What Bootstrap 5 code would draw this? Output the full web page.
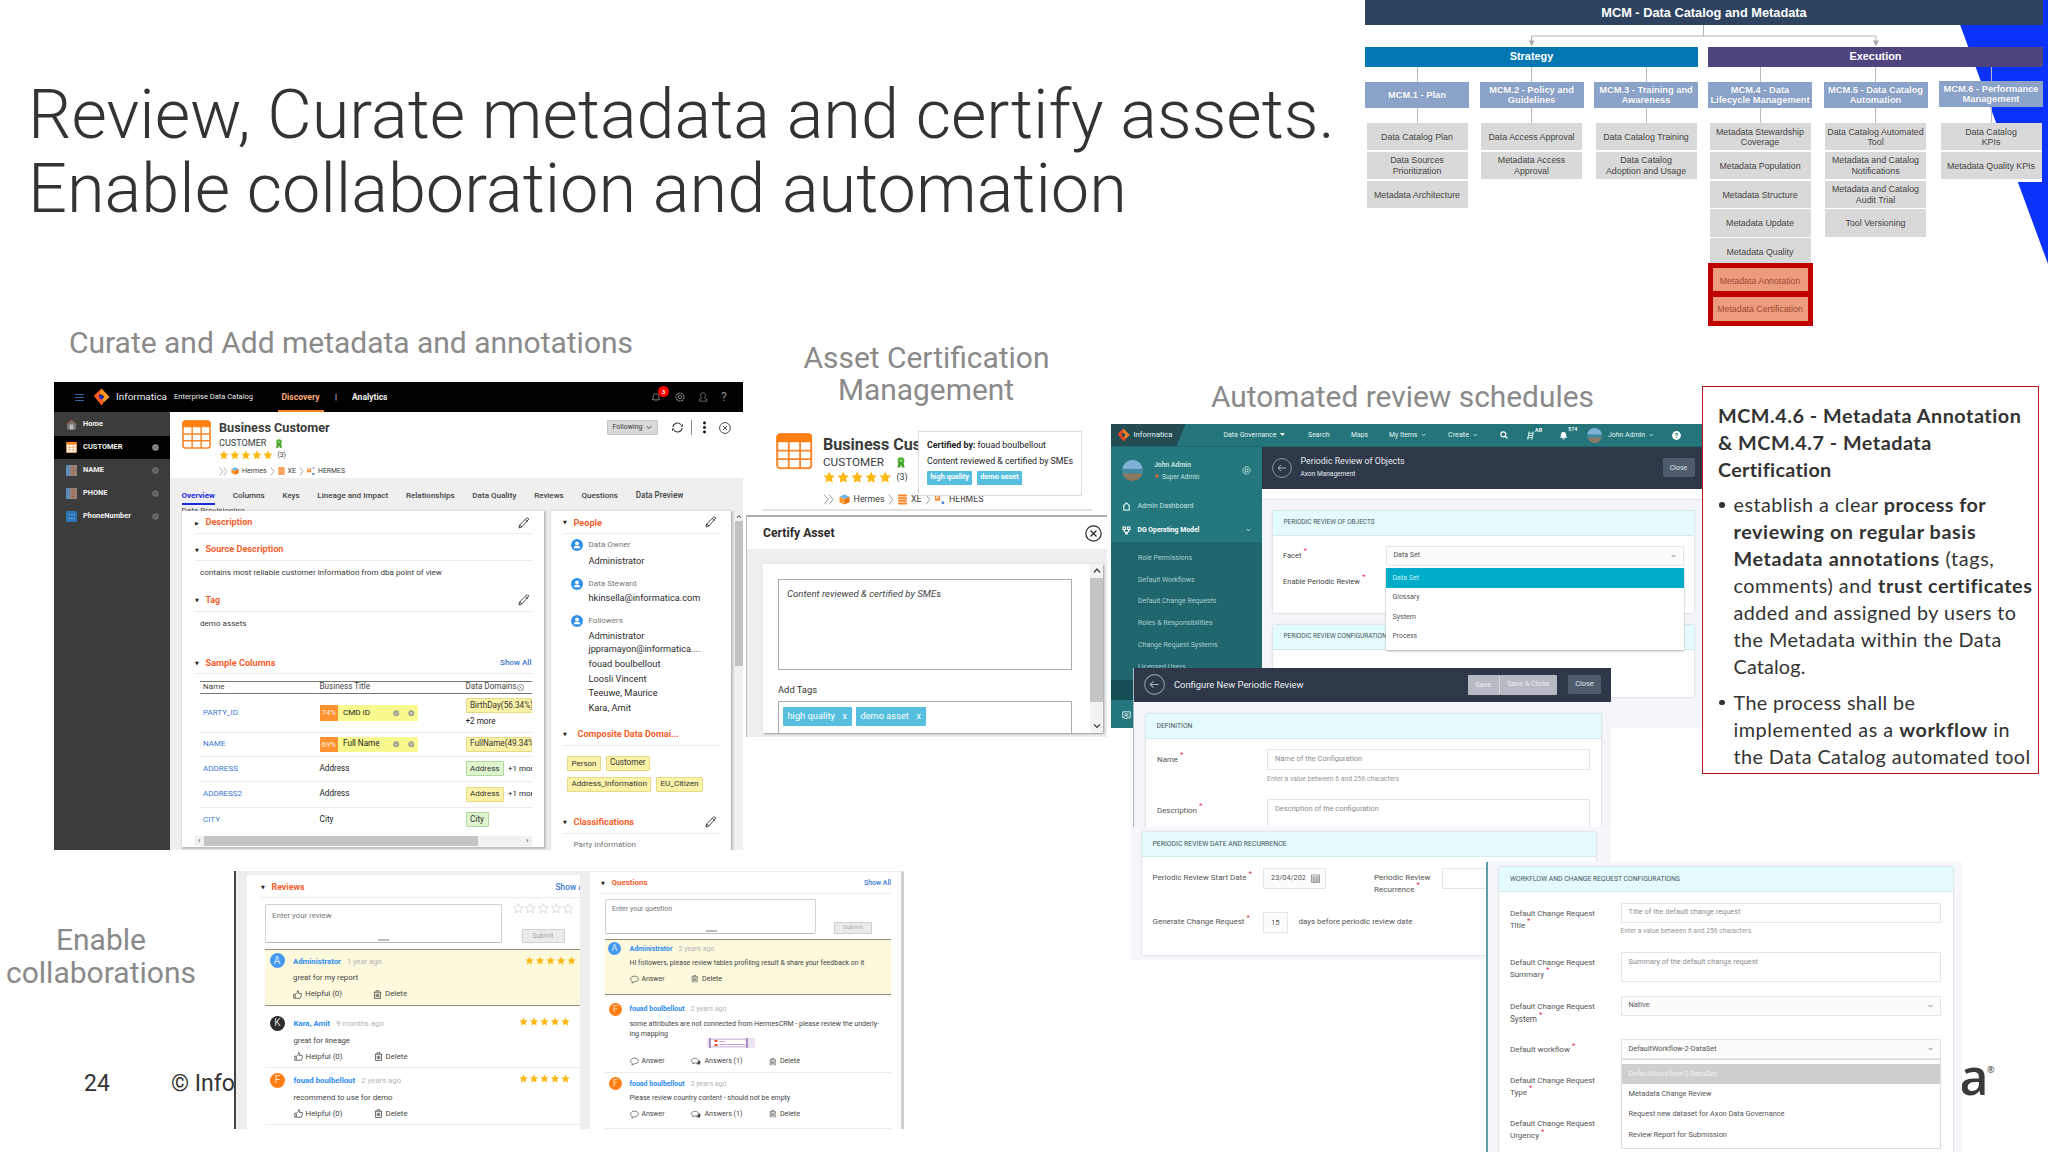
<!DOCTYPE html>
<html lang="en">
<head>
<meta charset="utf-8">
<title>Review, Curate metadata and certify assets</title>
<link href="https://cdn.jsdelivr.net/npm/bootstrap@5.3.0/dist/css/bootstrap.min.css" rel="stylesheet">
<style>
html,body{margin:0;background:#fff}
body{position:relative;width:2048px;height:1152px;overflow:hidden;font-family:Roboto,"Liberation Sans",sans-serif;color:#333;font-size:8px;line-height:1.2}
svg{display:block;flex:none;overflow:visible}
.shot{position:absolute;overflow:hidden}
.fit{display:inline-block;white-space:nowrap;flex:none}
.ttl{position:absolute;color:#8a8a8a;font-size:28.6px;line-height:32.6px;text-align:center;white-space:nowrap}
.ttl-main{left:28px;top:77.5px;font-size:68.5px;line-height:73.7px;font-weight:300;color:#333;text-align:left}
.t-curate{left:69px;top:326.5px}.t-asset{left:803.5px;top:341.5px;width:245px}.t-auto{left:1211px;top:381px}.t-enable{left:0;top:924px;width:202px}
.foot{position:absolute;top:1069.5px;font-size:23px;line-height:28px;color:#333;white-space:nowrap}
.f-num{left:84px}.f-copy{left:171px}
.brand-a{position:absolute;left:1959.5px;top:1045px;font:600 50px/62px "Open Sans",sans-serif;color:#3a3a3a}
.brand-r{position:absolute;left:1987px;top:1064px;font:9px/12px "Open Sans",sans-serif}
.wedge{position:absolute;left:1951px;top:0}
/* operating model chart */
.chart{position:absolute;left:1365px;top:0;width:678px;font-family:"Liberation Sans",Arial,sans-serif;text-align:center}
.c-top{height:25.3px;background:#2d4360;color:#fff;font-weight:700;font-size:12.8px}
.c-arrows{height:21.7px}
.c-band{height:19.8px;color:#fff;font-weight:700;font-size:10.9px}
.c-strat{background:#0377b2}.c-exec{background:#50447f}
.c-g1{width:333px}.c-g2{width:335px}
.c-colm{width:104px}
.c-wire{width:1px;height:15.4px;background:#b9bcc4;margin:auto}
.c-wire.low{height:14.6px}
.c-wire.hi{height:14.2px}
.c-wire.hi-low{height:15.8px}
.c-head{height:26.3px;background:#8ba2c9;color:#fff;font-weight:700;font-size:9.3px;line-height:10px;white-space:nowrap;text-shadow:0 0 1px #6c83ab}
.c-list{width:102px;margin:auto;background:#fff;padding-bottom:1px}
.c-cell{height:27.2px;margin:0 .5px 1.6px;padding-top:1.5px;background:#d9d9d9;color:#444;font-size:8.85px;line-height:10.7px;white-space:nowrap}
.c-flag{position:absolute;left:1707.5px;top:263px;width:105px;height:62.6px;border:5px solid #c00000;background:#c00000;font-family:"Liberation Sans",sans-serif}
.c-flag div{height:23.2px;padding-top:3px;background:#eb9c7d;color:#9b4a35;font-size:8.8px}
.c-flag div+div{padding-top:1px}
/* requirement note */
.note{position:absolute;left:1702px;top:386px;width:336.5px;height:388px;border:1.5px solid #b8161c;background:#fff;padding:14.5px 0 0 15px;font:19.8px/27px Lato,sans-serif;color:#333}
.note ul{margin:8.7px 0 0;padding:0;list-style:none}
.note li{padding-left:15.5px;margin-bottom:8.7px;position:relative}
.note li::before{content:"";position:absolute;left:1px;top:11px;width:5.5px;height:5.5px;border-radius:50%;background:#333}
.note .fit{display:block;width:max-content}
/* catalog window */
.edc{left:54px;top:382px;width:689px;height:468px;background:#efefef;color:#3a3a3a}
.edc-bar{height:30px;background:#000;color:#eee;padding-left:21px;display:grid;grid-template-columns:18px 23px 58px 107.5px 53.5px 17px 299px 24px 23px 23px auto;align-items:center}
.edc-bar>svg,.bellbox{color:#8a8a8a}
.edc-bar .q{font-size:12px;color:#8a8a8a}
.disc{color:#ffa878;font-weight:700;position:relative}
.disc::after{content:"";position:absolute;left:-4px;right:-4px;bottom:-9.5px;height:1.5px;background:#f58220}
.bellbox{position:relative}
.bellbox b{position:absolute;left:7px;top:-6px;width:11px;height:11px;border-radius:50%;background:#f00;color:#fff;font-size:6px;line-height:11px;text-align:center}
.edc-side{width:116px;background:#3c3c3d;color:#f2f2f2;font-weight:700;flex:none}
.edc-side>div{height:23.1px;padding:0 11px 0 12px;display:flex;align-items:center;gap:6px}
.edc-side>div:first-child{height:24px}
.edc-side .on{background:#000}
.edc-side svg:last-child{margin-left:auto}
.edc-head{height:66px;background:#fff;padding:8px 12px 0 12px;display:flex}
.r-title{height:17px;font-weight:700}.r-name{height:12px;gap:9px}.r-stars{height:12px;gap:1.1px}.r-path{height:20px;gap:3px}
.b-tools{margin-left:auto;height:15px;display:flex;align-items:center}
.b-tools .dots{margin:0 13px 0 11px}
.b-follow{width:51px;height:14.5px;background:#d9d9d9;border:1px solid #c6c6c6;border-radius:1px;margin-right:14px}
.edc-tabs{height:32.5px;padding:12px 0 0 11.5px;overflow:hidden}
.edc-tabs .d-flex{gap:17.8px;height:12px;font-weight:500;font-size:8.1px;color:#444}
.tab-on{color:#1a2be0;font-weight:700;position:relative}
.tab-on::after{content:"";position:absolute;left:0;right:0;top:11.5px;height:2px;background:#1a2be0}
.sheet{background:#fff;box-shadow:1px 1px 2px 1px #bbb}
.sec{height:22px;display:flex;align-items:center;color:#f4602c;font-weight:700;font-size:8.8px;border-bottom:1px solid #ececec;width:100%}
.sec::before{content:"▼";color:#222;font:5px "DejaVu Sans";width:10.5px}
.sec.shut::before{content:"▶"}
.sec svg,.sec a{margin-left:auto}
.sec svg{margin-right:2px}
.edc-r .sec svg{margin-right:4px}
.sec a,.lk{color:#3a78cf;text-decoration:none}
.sec a{font-size:8.2px;font-weight:500}
.edc-l{width:361.5px;height:336.5px;padding:1px 12px 0 13px;margin-left:12px;display:grid;grid-template-rows:22.5px 27px 24px 26.5px 25px 37.5px 7px 12.5px 39.5px 23.5px 25px 26px 24.5px 3.5px 10px;align-items:center}
.edc-l .sec{align-self:end}
.pad5{padding-left:5px}
.trow{height:100%;margin-left:5px;padding-left:3px;display:grid;grid-template-columns:116.5px 146px 66px;align-items:center;border-bottom:1px solid #ececec;overflow:hidden;color:#222}
.trow.th-line{border-top:1px solid #777;border-bottom:1px solid #777;color:#444}
.trow.last{border:0}
.tagy,.tagg{display:inline-flex;align-items:center;height:15px;border:1px solid #e9da85;background:#fbf2a9;padding:0 3.5px;white-space:nowrap;color:#333;border-radius:1px}
.tagg{background:#dff5cf;border-color:#b1d99b}
.dd2{display:flex;flex-direction:column;align-items:flex-start;gap:4px;overflow:hidden}
.bt{display:flex;width:98px;height:15.5px;background:#f8f98e;align-items:center;gap:5px}
.bt i{width:18.5px;height:100%;background:#ff9330;color:#fff0dd;font-style:normal;display:flex;align-items:center;justify-content:center}
.bt svg{margin-left:3px}.bt .nmw{width:42px}
.hs{height:10px;background:#f1f1f1;display:flex;justify-content:space-between;align-items:center;padding:0 3px}
.hs i{width:274px;height:10px;background:#c4c4c4;margin-right:auto;margin-left:3.5px}
.edc-r{width:180px;height:342px;margin-left:7px;padding:1px 10px 0 12.5px;display:grid;grid-template-rows:22.5px 19.5px 14px 9px 14px 14px 9.5px 14px repeat(6,14.4px) 9.5px 22px 66px 22px 22px;align-items:center;font-size:8.7px;color:#2c2c2c}
.who{display:flex;align-items:center;gap:6px;padding-left:7.5px;color:#777;font-size:8.4px}
.who.first{padding-top:3px}
.pl{padding-left:25.5px;display:flex}
.cdd{display:flex;flex-wrap:wrap;align-content:center;gap:6px 4.5px;padding:0 0 10px 4px}
.party{padding-left:10.5px;color:#777}
.vs{margin-left:auto;width:8px;background:#f1f1f1;padding-top:3px}
.vs i{display:block;width:8px;height:145px;background:#c1c1c1;margin-top:2px}
/* certification */
.cert{left:746px;top:424.5px;width:346px;height:88px;color:#3a3a3a}
.cert-in{padding:8px 0 0 13.5px;border-bottom:2px solid #e2e2e2;height:86px;margin-left:16px}
.cert-tx{margin-left:11px}
.k-title{height:22px;line-height:24px;font-weight:700}.k-name{height:15px;gap:11.5px}.k-stars{height:15px;gap:1.5px}.k-path{height:29px;gap:3.8px}
.tip{position:absolute;left:172px;top:6px;width:163.5px;height:65.5px;background:#fff;border:1px solid #d9dde3;padding:8px 0 0 8px;color:#222}
.tip .d-flex{gap:4.5px}
.tip .t1{height:14px}.tip .t2{height:17.5px;padding-top:2px}
.btag{background:#56bfe0;color:#fff;display:flex;align-items:center;justify-content:center;border-radius:1px}
.tip .btag{height:13.5px;width:45.3px;font-weight:700}
.dlg{left:746px;top:514.5px;width:361px;height:222px;background:#eee;border-top:2px solid #adadad;border-left:1px solid #bbb}
.dlg-h{height:32px;background:#fff;padding:2px 5px 0 16px;font-weight:700;color:#2a2a2a}
.dlg-b{margin:15.5px 4px 0 16px;height:169px;background:#fff;box-shadow:1px 1px 2px #999;display:flex;overflow:hidden}
.dlg-i{padding:14.5px 0 0 15px}
.dlg-t{width:294px;height:91px;border:1px solid #aaa;padding:8.5px 8px;font-style:italic;color:#444}
.dlg-l{height:31px;padding-top:14px}
.dlg-g{width:294px;height:40px;border:1px solid #aaa;padding:5px 4px;display:flex;gap:4px}
.dlg-g .btag{height:19px;padding:0 5px 0 4.5px;gap:7.5px}
.dlg-s{margin-left:auto;width:13px;background:#f3f3f3;display:flex;flex-direction:column;align-items:center;padding:4px 0}
.dlg-s i{width:13px;height:124px;background:#c4c4c4;margin:5px 0 auto}
/* governance window */
.axon{left:1110.5px;top:424px;width:591px;height:304px;background:#f5f5fa;color:#444;font-size:7.6px}
.ax-bar{height:22.6px;background:#23757a;color:#e4f3f3;display:grid;grid-template-columns:113px 84.5px 43px 38px 59px 52px 26px 29px 32px 21px 64px auto;align-items:center;border-bottom:1px solid #1d676c}
.ax-logo{height:22px;width:75px;background:#234c53;clip-path:polygon(0 0,100% 0,88% 100%,0 100%);display:flex;align-items:center;gap:4px;padding-left:6px}
.cnt{font-size:5.5px;font-weight:700;margin-top:-4px}
.ava{border-radius:50%;background:linear-gradient(#7fb0d6 0 40%,#3f8aa0 45% 62%,#8a7860 66%);display:block;width:21px;height:21px;flex:none}
.ava.sm{width:15px;height:15px}
.ax-side{width:151px;background:#24777c;color:#c4e1e2;flex:none}
.ax-me{height:47.5px;padding:0 11px 0 11.5px}
.ax-me div{margin-left:11px;line-height:11.5px;padding-top:2px}
.ax-me svg{color:#d9efef}
.ax-me .led{display:inline-block;width:4px;height:4px;border-radius:50%;background:#b8684a;margin:0 3px 1px 1px}
.ax-side .it{display:flex;align-items:center;height:24px;padding:0 11px 0 11px}
.ax-side .it.btm{height:31px}
.ax-side .it svg:first-child{margin-right:7px}
.ax-sub{height:137.5px;background:#1f676c;padding:5px 0 0 27.5px;color:#a9cdcf}
.ax-sub div{height:21.8px;display:flex;align-items:center}
.ax-strip{height:20px;background:#154e54}
.ax-h{height:42.5px;background:#2e3848;color:#e6e9ee;display:flex;align-items:center;padding:0 7px 0 10px}
.ax-h div{margin-left:9px;line-height:12px}
.bclose{background:#4d5b6d;color:#dfe3e8;height:19px;width:32px;display:flex;align-items:center;justify-content:center;border-radius:1px}
.ax-white{height:11px;background:#fff;border-bottom:1px solid #e4e4ea}
.fcard{background:#fff;box-shadow:0 0 2px #bcc3c9}
.ax-c1{margin:10.5px 7.5px 0 11px;height:102.5px}.ax-c2{margin:11.5px 7.5px 0 11px;height:72.5px}
.ax-g{display:grid;grid-template-columns:102.5px 298px;grid-template-rows:20px 32px;padding:10px 0 0 10.5px;align-items:center}
.fhead{height:25px;background:#e4fbfe;border-bottom:1px solid #d5e8ee;display:flex;align-items:center;padding:1.5px 0 0 11px;color:#46545c}
.req{color:#e8315b;font-size:8px;top:-.6em;margin-left:2px;line-height:0;position:relative;vertical-align:baseline}
.inp{border:1px solid #e6e6ea;background:#fff;display:flex;align-items:center;justify-content:space-between;padding:0 7px;color:#8d8d92}
.inp.dk{color:#555;background:#fcfcfc}
.hint{color:#999;padding-top:4.5px}
.ax-menu{position:absolute;left:275px;top:144px;width:298px;height:81.5px;background:#fff;box-shadow:0 1px 2px #aaa;color:#555}
.ax-menu div{height:19.5px;padding-left:7px;display:flex;align-items:center}
.ax-menu .sel{background:#00acc8;color:#c6f0f7}
.cfg{left:1133px;top:668px;width:478px;height:159px;background:#f5f5fa;border-left:1px solid #a9bcc6;font-size:8px;color:#555}
.cfg-h{height:33.6px;background:#2e3848;color:#eceef2;display:flex;align-items:center;padding:0 10px;gap:0}
.cfg-h .cfg-t{margin-left:9px;display:flex;margin-right:auto}
.cfg-h .bclose{margin-left:11px;width:33px}
.svb{height:19.5px;width:57.5px;background:#b7bac2;color:#eeeff1;display:flex;align-items:center;justify-content:center;border-radius:1px}
.svb.s1{width:31.5px;border-right:1px solid #d5d7dc}
.cfg .fcard{margin:12px 10px 0 11.5px;height:130px}
.cfg-g{display:grid;grid-template-columns:110px 322.5px;grid-template-rows:21.5px 17.5px 11.5px 40px;padding:10px 0 0 11.5px}
.cfg-g .lab{padding-top:6.5px}
.inp.top{align-items:flex-start;padding-top:5px}
.rec{left:1131px;top:827px;width:480px;height:133px;background:#f7f7fb;color:#555}
.rec .fcard{margin:4.5px 15px 0 10.5px;height:123.5px}
.rec-g{padding:11px 0 0 11px;display:grid;grid-template-columns:110.5px 111px 68px 160px;grid-template-rows:21.5px 23px 20.5px}
.rec-g .two{line-height:12px;padding-top:4.5px}
.rec-g .w1{width:62.5px;padding-right:5px}.rec-g .w2{width:26px}.rec-g .dys{gap:11px}
.wf{left:1486px;top:862px;width:476px;height:290px;background:#f6f6fb;border-left:2px solid #5f9fa8;color:#555}
.wf .fcard{margin:4.5px 9px 0 11px;height:300px}
.wf-g{padding:11px 0 0 11px;display:grid;grid-template-columns:110.5px 320px;grid-template-rows:49.3px 44px 43.5px 36.5px 43.5px 40px}
.wf-g .lab{line-height:12px;padding-top:5px}
.wf-g .up{margin-top:-6px}
.wf-g .inp{height:20px}.wf-g .inp.top{height:30.5px}
.wf-menu{position:absolute;left:132.5px;top:197px;width:320px;height:89.5px;background:#fff;border:1px solid #dcdce0;padding-top:4px}
.wf-menu div{height:20.3px;padding-left:7px;display:flex;align-items:center}
.wf-menu .sel{background:#cfcfcf;color:#f1f1f1}
/* social panels */
.rev{left:234px;top:871px;width:356px;height:257.5px;background:#eee;border-left:2.5px solid #444}
.rev-in{margin:4px 10px 0 11px;height:260px;background:#fff;padding-left:14px;overflow:hidden;display:grid;grid-template-rows:23px 6px 38.5px 6px 57.5px 62px 57px;color:#444}
.rev .sec,.ques .sec{height:100%;padding-top:2px}
.rev .sec a{margin-right:-8px}
.ques{left:590px;top:871px;width:314px;height:257.5px;background:#fff;border-right:3px solid #cfcfcf;padding:0 10px 0 11px;display:grid;grid-template-rows:21.5px 5.5px 34.5px 5px 56px 78.5px 55.5px;color:#444;border-top:1px solid #eee}
.ent{display:flex;align-items:flex-start}
.ebox{border:1px solid #d2d2d2;border-bottom-color:#bbb;border-radius:2px;padding:6px 6px;height:100%;width:236.5px;margin-left:4px;position:relative;color:#777}
.ebox::after{content:"";position:absolute;left:50%;bottom:1px;width:11px;height:2px;margin-left:-5px;background:#bbb}
.ques .ebox{width:211px;padding-top:4px}
.rate{margin-left:11px}
.rate .d-flex{gap:2.2px;margin-top:-1px}
.sbm{background:#ebebeb;border:1px solid #cfcfcf;color:#aaa;display:flex;align-items:center;justify-content:center;border-radius:1px;width:43px;height:14px;margin:15.5px 0 0 9px}
.ques .sbm{width:38.5px;height:12px;margin:23px 0 0 17.5px}
.msg{margin-left:4px;display:flex;position:relative;border-bottom:1px solid #ececec;padding:4.5px 0 0 5px}
.msg.hot{background:#fcf9dd;border-top:1.5px solid #918c78;border-bottom:1.5px solid #918c78;padding:3.5px 0 0 4.5px}
.msg.mid{padding-top:9.5px}
.msg .bd{margin-left:8.5px}
.msg .bd>div{display:flex;align-items:center}
.l1{height:17px}.l2{height:16px}.msg .act{height:16px;gap:3px}
.act .gap-l{margin-left:28px}
.ques .msg{padding:4px 0 0 4px}
.ques .msg.hot{padding:2.5px 0 0 3px}
.ques .msg.mid{padding-top:8px}
.ques .l1{height:14px}.ques .l2{height:15px}.ques .act{height:16px}
.ques .msg .bd{margin-left:7.5px}.ques .msg.hot .bd{margin-left:8.5px}
.ques .gap-l{margin-left:24px}
.ques .msg .bd .wrap3{display:block;height:37px;line-height:10px;padding-top:2.5px}
.wrap3 svg{margin:-1px 0 0 77px}
.av{width:15px;height:15px;border-radius:50%;background:#4499ef;color:#d6e9ff;font-size:10px;display:flex;align-items:center;justify-content:center;flex:none}
.ques .av{width:13px;height:13px;font-size:9px}
.av.k{background:#2c2c2c;color:#ddd}.av.f{background:#ff7e14;color:#ffe0c4}
.nm{color:#2e8cf0;font-weight:700}
.ago{color:#b4b4b4;margin-left:6px}
.stars{position:absolute;left:254px;top:5.5px;gap:1.5px}
.hot .stars{left:259.5px;top:6px}
.mid .stars{top:10.5px}
</style>
</head>
<body>
<svg width="0" height="0" class="position-absolute">
<defs>
<symbol id="star" viewBox="0 0 20 20"><path fill="#fdb913" d="M10 1l2.800 6 6.400.8-4.700 4.500 1.200 6.500L10 15.600l-5.700 3.200 1.200-6.500L.8 7.800 7.200 7z"/></symbol>
<symbol id="staro" viewBox="0 0 20 20"><path fill="#fff" stroke="#cfcfcf" stroke-width="1.400" d="M10 1l2.800 6 6.400.8-4.700 4.500 1.200 6.500L10 15.600l-5.700 3.200 1.200-6.500L.8 7.800 7.200 7z"/></symbol>
<symbol id="s5" viewBox="0 0 51 9"><use href="#star" width="9" height="9"/><use href="#star" x="10.500" width="9" height="9"/><use href="#star" x="21" width="9" height="9"/><use href="#star" x="31.500" width="9" height="9"/><use href="#star" x="42" width="9" height="9"/></symbol>
<symbol id="tbl" viewBox="0 0 30 30"><rect x="1" y="1" width="28" height="28" rx="2.500" fill="#fff" stroke="#f8862a" stroke-width="1.700"/><path d="M1 7V3.500A2.500 2.500 0 013.500 1h23A2.500 2.500 0 0129 3.500V7z" fill="#ff7f11" stroke="#ff7f11"/><path d="M1 14.500h28M1 21.500h28M10.500 7v22M19.800 7v22" stroke="#f8862a" stroke-width="1.500"/></symbol>
<symbol id="logo" viewBox="0 0 20 20"><path d="M10 0L1 8.500 10 20l3-4-5-5z" fill="#ff5a1f"/><path d="M10 0l9.500 10L13 16l-3-3 3-4-5-3z" fill="#ff9a1f"/><path d="M7 7l4 1 2 2.500-3 3-3-3z" fill="#2b2bb0"/></symbol>
<symbol id="logo2" viewBox="0 0 20 20"><path d="M10 0L1 8.500 10 20l3-4-5-5z" fill="#f0441c"/><path d="M10 0l9.500 10L13 16l-3-3 3-4-5-3z" fill="#ff7a2a"/><path d="M7 7l4 1 2 2.500-3 3-3-3z" fill="#234c53"/></symbol>
<symbol id="rib" viewBox="0 0 10 12"><circle cx="5" cy="4" r="3.700" fill="#4caf2f"/><path d="M2.500 6L1 11.500h3L5 8l1 3.500h3L7.500 6z" fill="#3f9c27"/><circle cx="5" cy="4" r="1.500" fill="#8fd37a"/></symbol>
<symbol id="cube" viewBox="0 0 12 12"><path d="M6 .5L11.500 3 6 5.500.5 3z" fill="#6cb5ea"/><path d="M.5 3L6 5.500v6L.5 9z" fill="#ff9c2a"/><path d="M11.500 3L6 5.500v6L11.500 9z" fill="#e8730c"/></symbol>
<symbol id="db" viewBox="0 0 10 12"><path d="M1 1.500h8M1 4.500h8M1 7.500h8M1 10.500h8" stroke="#f8862a" stroke-width="2.200" stroke-linecap="round"/></symbol>
<symbol id="sch" viewBox="0 0 12 12"><rect x="0" y="2" width="6" height="6" fill="#f8862a"/><path d="M2 2v3h2V2" stroke="#fff" fill="none"/><rect x="9" y="0" width="2" height="2" fill="#4b7fd0"/><rect x="8" y="9" width="3" height="3" fill="#4b7fd0"/><path d="M6 5l3-4M6 6l3 4" stroke="#9bb6e2" stroke-width=".7"/></symbol>
<symbol id="chv" viewBox="0 0 6 12"><path d="M.7.7L5 6 .7 11.300" fill="none" stroke="#888" stroke-width=".9"/></symbol>
<symbol id="chv2" viewBox="0 0 12 12"><path d="M.7.7L5 6 .7 11.300M6.200.7L10.500 6l-4.300 5.300" fill="none" stroke="#888" stroke-width=".9"/></symbol>
<symbol id="pen" viewBox="0 0 12 12"><path d="M1 11l.6-3L8.500 1.200q1.400-.8 2.300.9L4 9.800zM7.300 2.400l2.200 2.300M1.600 8L4 9.800" fill="none" stroke="#333" stroke-width=".9"/></symbol>
<symbol id="xc" viewBox="0 0 12 12"><circle cx="6" cy="6" r="5.400" fill="none" stroke="currentColor" stroke-width=".9"/><path d="M3.900 3.900l4.200 4.200M8.100 3.900L3.900 8.100" stroke="currentColor" stroke-width=".9"/></symbol>
<symbol id="dn" viewBox="0 0 8 6"><path d="M1 1.300l3 3 3-3" fill="none" stroke="currentColor" stroke-width="1.200"/></symbol>
<symbol id="dot-x" viewBox="0 0 8 8"><circle cx="4" cy="4" r="3.700" fill="#8c8c8c"/><path d="M2.700 2.700l2.600 2.600M5.300 2.700L2.700 5.300" stroke="#444" stroke-width=".8"/></symbol>
<symbol id="dot-y" viewBox="0 0 8 8"><circle cx="4" cy="4" r="3.700" fill="#a3a38a"/><path d="M2.700 2.700l2.600 2.600M5.300 2.700L2.700 5.300" stroke="#eee" stroke-width=".8"/></symbol>
<symbol id="dot-c" viewBox="0 0 8 8"><circle cx="4" cy="4" r="3.700" fill="#a3a38a"/><path d="M2.300 4l1.300 1.300 2.200-2.500" fill="none" stroke="#eee" stroke-width=".9"/></symbol>
<symbol id="usr" viewBox="0 0 12 12"><circle cx="6" cy="6" r="6" fill="#3090ea"/><circle cx="6" cy="4.400" r="1.900" fill="#fff"/><path d="M2.700 9.300q.3-2.200 2.200-2.500h2.200q1.900.3 2.200 2.500z" fill="#fff"/></symbol>
<symbol id="thumb" viewBox="0 0 12 12"><path d="M1 5.500h2v5.500H1zM3 6l2.500-2.500L6 .8q1.800 0 1.500 2.200L7.200 4.600H11v3.200L9.800 11H3" fill="none" stroke="#444" stroke-width="1"/></symbol>
<symbol id="bin" viewBox="0 0 12 12"><path d="M1 3h10M4 3V1h4v2M2 3v8.300h8V3M4.300 5v4.500M6 5v4.500M7.700 5v4.500" fill="none" stroke="#555" stroke-width="1.100"/></symbol>
<symbol id="bub" viewBox="0 0 12 12"><path d="M6 1.500c3 0 5.200 1.500 5.200 3.700S9 9 6 9L2.600 10.800l.4-2.300C1.500 7.800.8 6.500.8 5.200.8 3 3 1.500 6 1.500z" fill="none" stroke="#444" stroke-width=".9"/></symbol>
<symbol id="bubs" viewBox="0 0 14 12"><path d="M5.500 1.500c2.700 0 4.700 1.300 4.700 3.200S8.200 8 5.500 8L2.500 9.500l.4-2C1.500 6.800.8 5.800.8 4.700.8 2.800 2.800 1.500 5.500 1.500z" fill="none" stroke="#444" stroke-width=".9"/><path d="M11 4.500c2 .5 2.500 1.700 2.200 3-.1.600-.5 1-.9 1.400l.2 1.800-2-1C8.800 9.900 7.500 9.500 7 9q3.500-.5 4-4.500z" fill="#333"/></symbol>
<symbol id="bell" viewBox="0 0 12 12"><path d="M1.500 9.300h9L9.300 7.500V5q-.3-2.800-3.300-3-3 .2-3.300 3v2.500zM5 10.700h2" fill="none" stroke="currentColor" stroke-width="1"/></symbol>
<symbol id="gear" viewBox="0 0 12 12"><circle cx="6" cy="6" r="4.800" fill="none" stroke="currentColor" stroke-width="1.300" stroke-dasharray="2.700 .6"/><circle cx="6" cy="6" r="2.100" fill="none" stroke="currentColor" stroke-width="1.200"/></symbol>
<symbol id="man" viewBox="0 0 12 12"><path d="M4.300 7q-1.500-1.500-1.200-3.500Q3.600 1 6 1t2.900 2.500Q9.200 5.500 7.700 7q0 1 3 2v2H1.300V9q3-1 3-2z" fill="none" stroke="currentColor" stroke-width=".9"/></symbol>
<symbol id="back" viewBox="0 0 20 20"><circle cx="10" cy="10" r="9.400" fill="none" stroke="#8d97a5" stroke-width="1"/><path d="M14 10H6M9 7l-3 3 3 3" fill="none" stroke="#a9b1bd" stroke-width="1"/></symbol>
<symbol id="cells" viewBox="0 0 12 12"><rect width="12" height="12" fill="#8b8b8f"/><rect width="4" height="12" fill="#5a8dbd"/><path d="M4 3h8M4 6h8M4 9h8M8 0v12" stroke="#b5653a"/></symbol>
</defs>
</svg>

<div class="ttl ttl-main"><span class="fit" data-w="1307">Review, Curate metadata and certify assets.</span><br><span class="fit" data-w="1099">Enable collaboration and automation</span></div>
<div class="ttl t-curate"><span class="fit" data-w="564">Curate and Add metadata and annotations</span></div>
<div class="ttl t-asset"><span class="fit" data-w="246">Asset Certification</span><br><span class="fit" data-w="176">Management</span></div>
<div class="ttl t-auto"><span class="fit" data-w="383">Automated review schedules</span></div>
<div class="ttl t-enable"><span class="fit" data-w="90">Enable</span><br><span class="fit" data-w="190">collaborations</span></div>
<div class="foot f-num">24</div><div class="foot f-copy">© Informatica</div>
<div class="brand-a">a</div><div class="brand-r">®</div>

<svg class="wedge" width="97" height="264" viewBox="0 0 97 264"><path d="M0 0h97v264z" fill="#0a32fa"/></svg>
<div class="chart">
 <div class="c-top d-flex align-items-center justify-content-center">MCM - Data Catalog and Metadata</div>
 <svg class="c-arrows" width="678" height="21.700" viewBox="0 0 678 21.700"><path d="M338.500 0v11M166.500 17V11H511v6" fill="none" stroke="#b4b4b4"/><path d="M163.500 15.500h6l-3 6zM508 15.500h6l-3 6z" fill="#aaa"/></svg>
 <div class="d-flex justify-content-between">
  <div class="c-g1">
   <div class="c-band c-strat d-flex align-items-center justify-content-center">Strategy</div>
   <div class="d-flex justify-content-between">
    <div class="c-colm"><div class="c-wire"></div><div class="c-head d-flex align-items-center justify-content-center">MCM.1 - Plan</div><div class="c-wire low"></div>
     <div class="c-list"><div class="c-cell d-flex align-items-center justify-content-center">Data Catalog Plan</div><div class="c-cell d-flex align-items-center justify-content-center">Data Sources<br>Prioritization</div><div class="c-cell d-flex align-items-center justify-content-center">Metadata Architecture</div></div></div>
    <div class="c-colm"><div class="c-wire"></div><div class="c-head d-flex align-items-center justify-content-center">MCM.2 - Policy and<br>Guidelines</div><div class="c-wire low"></div>
     <div class="c-list"><div class="c-cell d-flex align-items-center justify-content-center">Data Access Approval</div><div class="c-cell d-flex align-items-center justify-content-center">Metadata Access<br>Approval</div></div></div>
    <div class="c-colm"><div class="c-wire"></div><div class="c-head d-flex align-items-center justify-content-center">MCM.3 - Training and<br>Awareness</div><div class="c-wire low"></div>
     <div class="c-list"><div class="c-cell d-flex align-items-center justify-content-center">Data Catalog Training</div><div class="c-cell d-flex align-items-center justify-content-center">Data Catalog<br>Adoption and Usage</div></div></div>
   </div>
  </div>
  <div class="c-g2">
   <div class="c-band c-exec d-flex align-items-center justify-content-center">Execution</div>
   <div class="d-flex justify-content-between">
    <div class="c-colm"><div class="c-wire"></div><div class="c-head d-flex align-items-center justify-content-center">MCM.4 - Data<br>Lifecycle Management</div><div class="c-wire low"></div>
     <div class="c-list"><div class="c-cell d-flex align-items-center justify-content-center">Metadata Stewardship<br>Coverage</div><div class="c-cell d-flex align-items-center justify-content-center">Metadata Population</div><div class="c-cell d-flex align-items-center justify-content-center">Metadata Structure</div><div class="c-cell d-flex align-items-center justify-content-center">Metadata Update</div><div class="c-cell d-flex align-items-center justify-content-center">Metadata Quality</div></div></div>
    <div class="c-colm"><div class="c-wire"></div><div class="c-head d-flex align-items-center justify-content-center">MCM.5 - Data Catalog<br>Automation</div><div class="c-wire low"></div>
     <div class="c-list"><div class="c-cell d-flex align-items-center justify-content-center">Data Catalog Automated<br>Tool</div><div class="c-cell d-flex align-items-center justify-content-center">Metadata and Catalog<br>Notifications</div><div class="c-cell d-flex align-items-center justify-content-center">Metadata and Catalog<br>Audit Trial</div><div class="c-cell d-flex align-items-center justify-content-center">Tool Versioning</div></div></div>
    <div class="c-colm"><div class="c-wire hi"></div><div class="c-head d-flex align-items-center justify-content-center">MCM.6 - Performance<br>Management</div><div class="c-wire hi-low"></div>
     <div class="c-list"><div class="c-cell d-flex align-items-center justify-content-center">Data Catalog<br>KPIs</div><div class="c-cell d-flex align-items-center justify-content-center">Metadata Quality KPIs</div></div></div>
   </div>
  </div>
 </div>
</div>
<div class="c-flag d-flex flex-column justify-content-between"><div class="d-flex align-items-center justify-content-center">Metadata Annotation</div><div class="d-flex align-items-center justify-content-center">Metadata Certification</div></div>

<!-- Enterprise Data Catalog window -->
<div class="shot edc">
 <div class="edc-bar">
  <svg width="9" height="9" viewBox="0 0 9 9"><path d="M0 1.500h9M0 4.500h9M0 7.500h9" stroke="#2f66a8"/></svg>
  <svg width="17" height="18"><use href="#logo"/></svg>
  <span class="d-flex"><span class="fit" data-w="51">Informatica</span></span>
  <span class="d-flex"><span class="fit" data-w="79">Enterprise Data Catalog</span></span>
  <span class="d-flex"><span class="fit disc" data-w="38">Discovery</span></span><span>|</span>
  <b class="d-flex"><span class="fit" data-w="35.500">Analytics</span></b>
  <span class="bellbox"><svg width="10" height="10"><use href="#bell"/></svg><b>3</b></span>
  <svg width="10" height="10"><use href="#gear"/></svg>
  <svg width="10" height="10"><use href="#man"/></svg>
  <span class="q">?</span>
 </div>
 <div class="d-flex h-100">
  <div class="edc-side">
   <div><svg width="11" height="11" viewBox="0 0 12 12"><path d="M1 6l5-5 5 5v5.500H1z" fill="#777"/><path d="M0 6l6-5 6 5" stroke="#a34a3a" fill="none"/><rect x="4" y="6" width="4" height="5.500" fill="#bbb"/></svg><span class="fit" data-w="20">Home</span></div>
   <div class="on"><svg width="11" height="11"><use href="#tbl"/></svg><span class="fit" data-w="39.500">CUSTOMER</span><svg width="7" height="7"><use href="#dot-x"/></svg></div>
   <div><svg width="11" height="11"><use href="#cells"/></svg><span class="fit" data-w="21">NAME</span><svg width="7" height="7" opacity=".6"><use href="#dot-x"/></svg></div>
   <div><svg width="11" height="11"><use href="#cells"/></svg><span class="fit" data-w="24.500">PHONE</span><svg width="7" height="7" opacity=".6"><use href="#dot-x"/></svg></div>
   <div><svg width="11" height="11" viewBox="0 0 12 12"><rect width="12" height="12" rx="1" fill="#2d74b5"/><path d="M2 4h8M2 8h8" stroke="#5fa3da"/></svg><span class="fit" data-w="48">PhoneNumber</span><svg width="7" height="7" opacity=".6"><use href="#dot-x"/></svg></div>
  </div>
  <div class="flex-grow-1">
   <div class="edc-head">
    <svg width="29" height="29"><use href="#tbl"/></svg>
    <div class="ms-2">
     <div class="r-title"><span class="fit" data-w="110.500">Business Customer</span></div>
     <div class="r-name d-flex align-items-center"><span class="fit" data-w="47.500">CUSTOMER</span><svg width="8" height="9"><use href="#rib"/></svg></div>
     <div class="r-stars d-flex align-items-center"><svg width="9.800" height="9.800"><use href="#star"/></svg><svg width="9.800" height="9.800"><use href="#star"/></svg><svg width="9.800" height="9.800"><use href="#star"/></svg><svg width="9.800" height="9.800"><use href="#star"/></svg><svg width="9.800" height="9.800"><use href="#star"/></svg><span class="fit ms-1" data-w="8.500">(3)</span></div>
     <div class="r-path d-flex align-items-center"><svg width="9" height="9"><use href="#chv2"/></svg><svg width="8" height="8"><use href="#cube"/></svg><span class="fit" data-w="24.500">Hermes</span><svg width="5" height="9"><use href="#chv"/></svg><svg width="7" height="8"><use href="#db"/></svg><span class="fit" data-w="8.500">XE</span><svg width="5" height="9"><use href="#chv"/></svg><svg width="8" height="8"><use href="#sch"/></svg><span class="fit" data-w="27">HERMES</span></div>
    </div>
    <div class="b-tools">
     <div class="b-follow d-flex align-items-center justify-content-center gap-1"><span class="fit" data-w="30">Following</span><svg width="6" height="5"><use href="#dn"/></svg></div>
     <svg width="11" height="11" viewBox="0 0 12 12"><path d="M1 5.500a5 5 0 018.700-2.700M11 6.500a5 5 0 01-8.700 2.700" fill="none" stroke="#333" stroke-width="1.200"/><path d="M9 5h3V2zM3 7H0v3z" fill="#333"/></svg>
     <svg class="ms-2" width="1" height="15"><path d="M.5 0v15" stroke="#888"/></svg>
     <svg class="dots" width="3" height="13" viewBox="0 0 3 13"><circle cx="1.500" cy="2" r="1.400"/><circle cx="1.500" cy="6.500" r="1.400"/><circle cx="1.500" cy="11" r="1.400"/></svg>
     <svg width="12" height="12"><use href="#xc"/></svg>
    </div>
   </div>
   <div class="edc-tabs"><div class="d-flex align-items-center"><span class="fit tab-on" data-w="33.500">Overview</span><span class="fit" data-w="32">Columns</span><span class="fit" data-w="17">Keys</span><span class="fit" data-w="71">Lineage and Impact</span><span class="fit" data-w="48.500">Relationships</span><span class="fit" data-w="44">Data Quality</span><span class="fit" data-w="29.500">Reviews</span><span class="fit" data-w="36.500">Questions</span><span class="fit" data-w="47.500">Data Preview</span></div>
   <div class="pt-1"><span class="fit" data-w="63">Data Provisioning</span></div></div>
   <div class="d-flex">
    <div class="sheet edc-l">
     <div class="sec shut"><span class="fit" data-w="47">Description</span><svg width="12" height="12"><use href="#pen"/></svg></div>
     <div class="sec"><span class="fit" data-w="78">Source Description</span></div>
     <div class="pad5 d-flex"><span class="fit" data-w="242">contains most reliable customer information from dba point of view</span></div>
     <div class="sec"><span class="fit" data-w="14.500">Tag</span><svg width="12" height="12"><use href="#pen"/></svg></div>
     <div class="pad5 d-flex"><span class="fit" data-w="46.500">demo assets</span></div>
     <div class="sec"><span class="fit" data-w="70">Sample Columns</span><a href="#"><span class="fit" data-w="31.500">Show All</span></a></div>
     <i></i>
     <div class="trow th-line"><span class="d-flex"><span class="fit" data-w="21.500">Name</span></span><span class="d-flex"><span class="fit" data-w="50.500">Business Title</span></span><span class="d-flex align-items-center"><span class="fit" data-w="51">Data Domains</span><svg width="7" height="7"><use href="#xc"/></svg></span></div>
     <div class="trow"><span class="lk d-flex"><span class="fit" data-w="35">PARTY_ID</span></span><span class="bt"><i><span class="fit" data-w="14.500">74%</span></i><span class="nmw"><span class="fit" data-w="27">CMD ID</span></span><svg width="6.500" height="6.500"><use href="#dot-c"/></svg><svg width="6.500" height="6.500"><use href="#dot-y"/></svg></span><span class="dd2"><span class="tagy"><span class="fit" data-w="63">BirthDay(56.34%)</span></span><span class="fit" data-w="30">+2 more</span></span></div>
     <div class="trow"><span class="lk d-flex"><span class="fit" data-w="22.500">NAME</span></span><span class="bt"><i><span class="fit" data-w="14.500">69%</span></i><span class="nmw"><span class="fit" data-w="36.500">Full Name</span></span><svg width="6.500" height="6.500"><use href="#dot-c"/></svg><svg width="6.500" height="6.500"><use href="#dot-y"/></svg></span><span class="overflow-hidden d-flex"><span class="tagy"><span class="fit" data-w="67">FullName(49.34%)</span></span></span></div>
     <div class="trow"><span class="lk d-flex"><span class="fit" data-w="35">ADDRESS</span></span><span class="d-flex"><span class="fit" data-w="30">Address</span></span><span class="d-flex align-items-center text-nowrap overflow-hidden"><span class="tagg"><span class="fit" data-w="29.500">Address</span></span><span class="fit ps-1">+1 mor</span></span></div>
     <div class="trow"><span class="lk d-flex"><span class="fit" data-w="39">ADDRESS2</span></span><span class="d-flex"><span class="fit" data-w="30">Address</span></span><span class="d-flex align-items-center text-nowrap overflow-hidden"><span class="tagy"><span class="fit" data-w="29.500">Address</span></span><span class="fit ps-1">+1 mor</span></span></div>
     <div class="trow last"><span class="lk d-flex"><span class="fit" data-w="17">CITY</span></span><span class="d-flex"><span class="fit" data-w="14">City</span></span><span class="d-flex"><span class="tagg"><span class="fit" data-w="14">City</span></span></span></div>
     <i></i>
     <div class="hs"><span>‹</span><i></i><span>›</span></div>
    </div>
    <div class="sheet edc-r">
     <div class="sec"><span class="fit" data-w="28.500">People</span><svg width="12" height="12"><use href="#pen"/></svg></div>
     <div class="who first"><svg width="12" height="12"><use href="#usr"/></svg><span class="fit" data-w="42">Data Owner</span></div>
     <div class="pl"><span class="fit" data-w="56">Administrator</span></div><i></i>
     <div class="who"><svg width="12" height="12"><use href="#usr"/></svg><span class="fit" data-w="48">Data Steward</span></div>
     <div class="pl"><span class="fit" data-w="112">hkinsella@informatica.com</span></div><i></i>
     <div class="who"><svg width="12" height="12"><use href="#usr"/></svg><span class="fit" data-w="34.500">Followers</span></div>
     <div class="pl"><span class="fit" data-w="56">Administrator</span></div>
     <div class="pl"><span class="fit" data-w="112">jppramayon@informatica....</span></div>
     <div class="pl"><span class="fit" data-w="72">fouad boulbellout</span></div>
     <div class="pl"><span class="fit" data-w="58">Loosli Vincent</span></div>
     <div class="pl"><span class="fit" data-w="69">Teeuwe, Maurice</span></div>
     <div class="pl"><span class="fit" data-w="42.500">Kara, Amit</span></div>
     <i></i>
     <div class="sec"><span class="ps-1"><span class="fit" data-w="101.500">Composite Data Domai...</span></span></div>
     <div class="cdd"><span class="tagy"><span class="fit" data-w="25">Person</span></span><span class="tagy"><span class="fit" data-w="35.500">Customer</span></span><span class="tagy"><span class="fit" data-w="75.500">Address_Information</span></span><span class="tagy"><span class="fit" data-w="38">EU_Citizen</span></span></div>
     <div class="sec"><span class="fit" data-w="60.500">Classifications</span><svg width="12" height="12"><use href="#pen"/></svg></div>
     <div class="party d-flex"><span class="fit" data-w="62.500">Party Information</span></div>
    </div>
    <div class="vs"><svg width="8" height="5" viewBox="0 0 8 5"><path d="M2 4l2-2.500L6 4" fill="none" stroke="#444"/></svg><i></i></div>
   </div>
  </div>
 </div>
</div>

<!-- Certified asset header and tooltip -->
<div class="shot cert">
 <div class="cert-in d-flex">
  <svg width="36.500" height="36.500"><use href="#tbl"/></svg>
  <div class="cert-tx">
   <div class="k-title"><span class="fit" data-w="141">Business Customer</span></div>
   <div class="k-name d-flex align-items-center"><span class="fit" data-w="61">CUSTOMER</span><svg width="10" height="11"><use href="#rib"/></svg></div>
   <div class="k-stars d-flex align-items-center"><svg width="12.400" height="12.400"><use href="#star"/></svg><svg width="12.400" height="12.400"><use href="#star"/></svg><svg width="12.400" height="12.400"><use href="#star"/></svg><svg width="12.400" height="12.400"><use href="#star"/></svg><svg width="12.400" height="12.400"><use href="#star"/></svg><span class="fit ms-1" data-w="11">(3)</span></div>
   <div class="k-path d-flex align-items-center"><svg width="12" height="11"><use href="#chv2"/></svg><svg width="11" height="11"><use href="#cube"/></svg><span class="fit" data-w="31">Hermes</span><svg width="6" height="11"><use href="#chv"/></svg><svg width="9" height="11"><use href="#db"/></svg><span class="fit" data-w="10.500">XE</span><svg width="6" height="11"><use href="#chv"/></svg><svg width="10" height="10"><use href="#sch"/></svg><span class="fit" data-w="34.500">HERMES</span></div>
  </div>
 </div>
 <div class="tip">
  <div class="t1"><span class="fit" data-w="119"><b>Certified by:</b> fouad boulbellout</span></div>
  <div class="t2"><span class="fit" data-w="146">Content reviewed &amp; certified by SMEs</span></div>
  <div class="d-flex"><span class="btag"><span class="fit" data-w="38.500">high quality</span></span><span class="btag"><span class="fit" data-w="38.500">demo asset</span></span></div>
 </div>
</div>
<div class="shot dlg">
 <div class="dlg-h d-flex align-items-center justify-content-between"><span class="fit" data-w="71.500">Certify Asset</span><svg width="17" height="17"><use href="#xc"/></svg></div>
 <div class="dlg-b">
  <div class="dlg-i">
   <div class="dlg-t"><span class="fit" data-w="154">Content reviewed &amp; certified by SMEs</span></div>
   <div class="dlg-l"><span class="fit" data-w="39">Add Tags</span></div>
   <div class="dlg-g"><span class="btag"><span class="fit" data-w="47.500">high quality</span><span class="fit" data-w="4.500">x</span></span><span class="btag"><span class="fit" data-w="48.500">demo asset</span><span class="fit" data-w="4.500">x</span></span></div>
  </div>
  <div class="dlg-s"><svg width="8" height="5" viewBox="0 0 8 5"><path d="M1 4.500L4 1l3 3.500" fill="none" stroke="#444" stroke-width="1.300"/></svg><i></i><svg width="8" height="6"><use href="#dn"/></svg></div>
 </div>
</div>

<!-- Periodic review of objects -->
<div class="shot axon">
 <div class="ax-bar">
  <div class="ax-logo"><svg width="13" height="14"><use href="#logo2"/></svg><span class="fit" data-w="39">Informatica</span></div>
  <span class="d-flex align-items-center gap-1"><span class="fit" data-w="53">Data Governance</span><svg width="5" height="3" viewBox="0 0 5 3"><path d="M0 0h5L2.500 3z" fill="#fff"/></svg></span><span class="d-flex"><span class="fit" data-w="21.500">Search</span></span><span class="d-flex"><span class="fit" data-w="17">Maps</span></span><span class="d-flex align-items-center gap-1"><span class="fit" data-w="28.500">My Items</span><svg width="5" height="4"><use href="#dn"/></svg></span><span class="d-flex align-items-center gap-1"><span class="fit" data-w="21">Create</span><svg width="5" height="4"><use href="#dn"/></svg></span>
  <svg width="8" height="8" viewBox="0 0 8 8"><circle cx="3.300" cy="3.300" r="2.500" fill="none" stroke="#fff" stroke-width="1.200"/><path d="M5 5l2.500 2.500" stroke="#fff" stroke-width="1.300"/></svg>
  <span class="d-flex"><svg width="9" height="9" viewBox="0 0 10 10"><path d="M2.500 2.500H9M1 7.500h6.500M3.500.5L2 9.500M8 .5L6.500 9.500M2 5h6" fill="none" stroke="#cfe9ea" stroke-width="1.100"/></svg><span class="cnt">AB</span></span>
  <span class="d-flex ps-1"><svg width="9" height="10" viewBox="0 0 12 12"><path d="M1 9.500h10L9.500 7.500V5Q9 1.800 6 1.500 3 1.800 2.500 5v2.500zM4.500 10.200h3v1.300h-3z" fill="#fff"/></svg><span class="cnt">574</span></span>
  <i class="ava sm"></i><span class="d-flex align-items-center gap-1"><span class="fit" data-w="37">John Admin</span><svg width="5" height="4"><use href="#dn"/></svg></span>
  <svg width="9" height="9" viewBox="0 0 9 9"><circle cx="4.500" cy="4.500" r="4.400" fill="#fff"/><text x="4.500" y="7" font-size="7" text-anchor="middle" font-weight="700" fill="#23757a">?</text></svg>
 </div>
 <div class="d-flex h-100">
  <div class="ax-side">
   <div class="ax-me d-flex align-items-center"><i class="ava"></i><div><b><span class="fit" data-w="37">John Admin</span></b><br><i class="led"></i><span class="fit" data-w="37.500">Super Admin</span></div><svg class="ms-auto" width="9" height="9"><use href="#gear"/></svg></div>
   <div class="it"><svg width="9" height="9" viewBox="0 0 9 9"><path d="M1 4.200l3.500-3.300L8 4.200M1.800 4v4.200h5.400V4" fill="none" stroke="#d6ecec" stroke-width="1.200"/></svg><span class="fit" data-w="56">Admin Dashboard</span></div>
   <div class="it text-white"><svg width="9" height="9" viewBox="0 0 9 9"><path d="M1 1h2.500v2.500H1zM5.500 1H8v2.500H5.500zM2.200 3.500v2l2.300 1.300 2.300-1.300v-2" fill="none" stroke="#fff" stroke-width="1.100"/><circle cx="4.500" cy="7.500" r="1.200" fill="#fff"/></svg><b class="fit" data-w="62">DG Operating Model</b><svg class="ms-auto" width="5" height="4"><use href="#dn"/></svg></div>
   <div class="ax-sub"><div><span class="fit" data-w="54">Role Permissions</span></div><div><span class="fit" data-w="56.500">Default Workflows</span></div><div><span class="fit" data-w="78.500">Default Change Requests</span></div><div><span class="fit" data-w="74.500">Roles &amp; Responsibilities</span></div><div><span class="fit" data-w="79.500">Change Request Systems</span></div><div><span class="fit" data-w="47.500">Licensed Users</span></div></div>
   <div class="ax-strip"></div>
   <div class="it btm"><svg width="9" height="9" viewBox="0 0 9 9"><path d="M.8.8h7.400v6H5L4 8 3 6.800H.8zM2.500 3h4M2.500 4.800h4" fill="none" stroke="#d6ecec"/></svg></div>
  </div>
  <div class="flex-grow-1">
   <div class="ax-h"><svg width="20" height="20"><use href="#back"/></svg><div><span class="fit" data-w="104">Periodic Review of Objects</span><br><span class="fit" data-w="55">Axon Management</span></div><span class="bclose ms-auto"><span class="fit" data-w="17.500">Close</span></span></div>
   <div class="ax-white"></div>
   <div class="fcard ax-c1">
    <div class="fhead"><span class="fit" data-w="91">PERIODIC REVIEW OF OBJECTS</span></div>
    <div class="ax-g"><span><span class="fit" data-w="18.500">Facet</span><sup class="req">*</sup></span><span class="inp dk h-100"><span class="fit" data-w="26.500">Data Set</span><svg width="5" height="4"><use href="#dn"/></svg></span><span><span class="fit" data-w="77">Enable Periodic Review</span><sup class="req">*</sup></span></div>
   </div>
   <div class="fcard ax-c2"><div class="fhead"><span class="fit" data-w="107">PERIODIC REVIEW CONFIGURATIONS</span></div></div>
  </div>
 </div>
 <div class="ax-menu"><div class="sel"><span class="fit" data-w="26.500">Data Set</span></div><div><span class="fit" data-w="27">Glossary</span></div><div><span class="fit" data-w="23.500">System</span></div><div><span class="fit" data-w="24.500">Process</span></div></div>
</div>

<!-- New periodic review -->
<div class="shot cfg">
 <div class="cfg-h"><svg width="21" height="21"><use href="#back"/></svg><span class="cfg-t"><span class="fit" data-w="129.500">Configure New Periodic Review</span></span><span class="svb s1"><span class="fit" data-w="16">Save</span></span><span class="svb"><span class="fit" data-w="42">Save &amp; Close</span></span><span class="bclose"><span class="fit" data-w="18.500">Close</span></span></div>
 <div class="fcard">
  <div class="fhead"><span class="fit" data-w="36">DEFINITION</span></div>
  <div class="cfg-g"><span class="lab"><span class="fit" data-w="21">Name</span><sup class="req">*</sup></span><span class="inp"><span class="fit" data-w="87">Name of the Configuration</span></span><span></span><span><span class="fit hint" data-w="132">Enter a value between 6 and 256 characters</span></span><span></span><span></span><span class="lab"><span class="fit" data-w="40">Description</span><sup class="req">*</sup></span><span class="inp top"><span class="fit" data-w="104">Description of the configuration</span></span></div>
 </div>
</div>
<div class="shot rec">
 <div class="fcard">
  <div class="fhead"><span class="fit" data-w="134">PERIODIC REVIEW DATE AND RECURRENCE</span></div>
  <div class="rec-g"><span class="align-self-center"><span class="fit" data-w="94">Periodic Review Start Date</span><sup class="req">*</sup></span><span class="inp dk w1"><span class="fit" data-w="35">23/04/202</span><svg width="9" height="9" viewBox="0 0 9 9"><path d="M.5 1h8v7.500h-8zM.5 3h8M.5 5h8M.5 7h8M3 3v5M6 3v5" fill="none" stroke="#888" stroke-width=".8"/></svg></span><span class="two"><span class="fit" data-w="56.500">Periodic Review</span><br><span class="fit" data-w="40.500">Recurrence</span><sup class="req">*</sup></span><span class="inp"></span>
  <span></span><span></span><span></span><span></span>
  <span class="align-self-center"><span class="fit" data-w="92">Generate Change Request</span><sup class="req">*</sup></span><span class="dys d-flex align-items-center"><span class="inp dk h-100 w2"><span class="fit" data-w="8.500">15</span></span><span class="fit" data-w="114">days before periodic review date</span></span></div>
 </div>
</div>

<!-- Workflow configuration -->
<div class="shot wf">
 <div class="fcard">
  <div class="fhead"><span class="fit" data-w="170">WORKFLOW AND CHANGE REQUEST CONFIGURATIONS</span></div>
  <div class="wf-g">
   <span class="lab"><span class="fit" data-w="85">Default Change Request</span><br><span class="fit" data-w="15">Title</span><sup class="req">*</sup></span>
   <span><span class="inp"><span class="fit" data-w="112">Title of the default change request</span></span><span class="fit hint" data-w="132.500">Enter a value between 6 and 256 characters.</span></span>
   <span class="lab"><span class="fit" data-w="85">Default Change Request</span><br><span class="fit" data-w="34">Summary</span><sup class="req">*</sup></span>
   <span><span class="inp top"><span class="fit" data-w="129.500">Summary of the default change request</span></span></span>
   <span class="lab"><span class="fit" data-w="85">Default Change Request</span><br><span class="fit" data-w="27">System</span><sup class="req">*</sup></span>
   <span><span class="inp dk"><span class="fit" data-w="21">Native</span><svg width="5" height="4"><use href="#dn"/></svg></span></span>
   <span class="lab"><span class="fit" data-w="60">Default workflow</span><sup class="req">*</sup></span>
   <span><span class="inp dk"><span class="fit" data-w="88">DefaultWorkflow-2-DataSet</span><svg width="5" height="4"><use href="#dn"/></svg></span></span>
   <span class="lab up"><span class="fit" data-w="85">Default Change Request</span><br><span class="fit" data-w="17">Type</span><sup class="req">*</sup></span><span></span>
   <span class="lab up"><span class="fit" data-w="85">Default Change Request</span><br><span class="fit" data-w="29">Urgency</span><sup class="req">*</sup></span>
  </div>
 </div>
 <div class="wf-menu"><div class="sel"><span class="fit" data-w="88">DefaultWorkflow-2-DataSet</span></div><div><span class="fit" data-w="83">Metadata Change Review</span></div><div><span class="fit" data-w="156">Request new dataset for Axon Data Governance</span></div><div><span class="fit" data-w="98.500">Review Report for Submission</span></div></div>
</div>

<!-- Reviews -->
<div class="shot rev"><div class="rev-in">
 <div class="sec"><span class="fit" data-w="33">Reviews</span><a href="#"><span class="fit" data-w="32.500">Show All</span></a></div><i></i>
 <div class="ent"><div class="ebox"><span class="fit" data-w="59.500">Enter your review</span></div><div class="rate"><div class="d-flex"><svg width="10.500" height="10.500"><use href="#staro"/></svg><svg width="10.500" height="10.500"><use href="#staro"/></svg><svg width="10.500" height="10.500"><use href="#staro"/></svg><svg width="10.500" height="10.500"><use href="#staro"/></svg><svg width="10.500" height="10.500"><use href="#staro"/></svg></div><div class="sbm"><span class="fit" data-w="21">Submit</span></div></div></div><i></i>
 <div class="msg hot"><span class="av">A</span><div class="bd"><div class="l1"><span class="fit nm" data-w="48">Administrator</span><span class="fit ago" data-w="35">1 year ago</span></div><div class="l2"><span class="fit" data-w="65">great for my report</span></div><div class="act"><svg width="9" height="9"><use href="#thumb"/></svg><span class="fit" data-w="37">Helpful (0)</span><svg class="gap-l" width="9" height="9"><use href="#bin"/></svg><span class="fit" data-w="22">Delete</span></div></div><svg class="stars" width="51" height="9"><use href="#s5"/></svg></div>
 <div class="msg mid"><span class="av k">K</span><div class="bd"><div class="l1"><span class="fit nm" data-w="36.500">Kara, Amit</span><span class="fit ago" data-w="48">9 months ago</span></div><div class="l2"><span class="fit" data-w="56.500">great for lineage</span></div><div class="act"><svg width="9" height="9"><use href="#thumb"/></svg><span class="fit" data-w="37">Helpful (0)</span><svg class="gap-l" width="9" height="9"><use href="#bin"/></svg><span class="fit" data-w="22">Delete</span></div></div><svg class="stars" width="51" height="9"><use href="#s5"/></svg></div>
 <div class="msg"><span class="av f">F</span><div class="bd"><div class="l1"><span class="fit nm" data-w="61.500">fouad boulbellout</span><span class="fit ago" data-w="40">2 years ago</span></div><div class="l2"><span class="fit" data-w="99">recommend to use for demo</span></div><div class="act"><svg width="9" height="9"><use href="#thumb"/></svg><span class="fit" data-w="37">Helpful (0)</span><svg class="gap-l" width="9" height="9"><use href="#bin"/></svg><span class="fit" data-w="22">Delete</span></div></div><svg class="stars" width="51" height="9"><use href="#s5"/></svg></div>
</div></div>

<!-- Questions -->
<div class="shot ques">
 <div class="sec"><span class="fit" data-w="36">Questions</span><a href="#"><span class="fit" data-w="27">Show All</span></a></div><i></i>
 <div class="ent"><div class="ebox"><span class="fit" data-w="60">Enter your question</span></div><div class="sbm"><span class="fit" data-w="19.500">Submit</span></div></div><i></i>
 <div class="msg hot"><span class="av">A</span><div class="bd"><div class="l1"><span class="fit nm" data-w="43">Administrator</span><span class="fit ago" data-w="36">2 years ago</span></div><div class="l2"><span class="fit" data-w="235">HI followers, please review tables profiling result &amp; share your feedback on it</span></div><div class="act"><svg width="9" height="9"><use href="#bub"/></svg><span class="fit" data-w="23">Answer</span><svg class="gap-l" width="7.500" height="7.500"><use href="#bin"/></svg><span class="fit" data-w="20">Delete</span></div></div></div>
 <div class="msg mid"><span class="av f">F</span><div class="bd"><div class="l1"><span class="fit nm" data-w="55">fouad boulbellout</span><span class="fit ago" data-w="36">2 years ago</span></div><div class="wrap3"><span class="fit" data-w="250">some attributes are not connected from HermesCRM - please review the underly-</span><br><span class="fit" data-w="38.500">ing mapping</span><svg width="48" height="10" viewBox="0 0 48 10"><rect width="48" height="10" fill="#ece4f3"/><rect x="3" y="1.500" width="36" height="7" fill="#fff" stroke="#c9b1da" stroke-width=".7"/><path d="M3 0v10M40 0v10" stroke="#9a6fb5" stroke-width="1.500"/><path d="M7.500 3h3M7.500 7h3" stroke="#e8542b" stroke-width="2"/><path d="M12 3.500h6M12 6.500h26" stroke="#b58ad0" stroke-width=".8"/></svg></div><div class="act"><svg width="9" height="9"><use href="#bub"/></svg><span class="fit" data-w="23">Answer</span><svg class="gap-l" width="10" height="9"><use href="#bubs"/></svg><span class="fit" data-w="38">Answers (1)</span><svg class="gap-l" width="7.500" height="7.500"><use href="#bin"/></svg><span class="fit" data-w="20">Delete</span></div></div></div>
 <div class="msg"><span class="av f">F</span><div class="bd"><div class="l1"><span class="fit nm" data-w="55">fouad boulbellout</span><span class="fit ago" data-w="36">2 years ago</span></div><div class="l2"><span class="fit" data-w="161">Please review country content - should not be empty</span></div><div class="act"><svg width="9" height="9"><use href="#bub"/></svg><span class="fit" data-w="23">Answer</span><svg class="gap-l" width="10" height="9"><use href="#bubs"/></svg><span class="fit" data-w="38">Answers (1)</span><svg class="gap-l" width="7.500" height="7.500"><use href="#bin"/></svg><span class="fit" data-w="20">Delete</span></div></div></div>
</div>

<!-- Requirement note -->
<div class="note">
 <b><span class="fit" data-ls="303.700">MCM.4.6 - Metadata Annotation</span><span class="fit" data-ls="213.700">&amp; MCM.4.7 - Metadata</span><span class="fit" data-ls="114">Certification</span></b>
 <ul>
  <li><span class="fit" data-ls="252.700">establish a clear <b>process for</b></span><b><span class="fit" data-ls="242.700">reviewing on regular basis</span></b><span class="fit" data-ls="261.300"><b>Metadata annotations</b> (tags,</span><span class="fit" data-ls="299">comments) and <b>trust certificates</b></span><span class="fit" data-ls="283">added and assigned by users to</span><span class="fit" data-ls="268.300">the Metadata within the Data</span><span class="fit" data-ls="72">Catalog.</span></li>
  <li><span class="fit" data-ls="181.700">The process shall be</span><span class="fit" data-ls="276.700">implemented as a <b>workflow</b> in</span><span class="fit" data-ls="297">the Data Catalog automated tool</span></li>
 </ul>
</div>

<script src="https://cdn.jsdelivr.net/npm/bootstrap@5.3.0/dist/js/bootstrap.bundle.min.js"></script>
<script>
// Scale each label to the width given in data-w; data-ls adjusts tracking instead.
document.querySelectorAll('[data-w]').forEach(function (el) {
  for (var i = 0; i < 3; i++) {
    var size = parseFloat(getComputedStyle(el).fontSize);
    el.style.fontSize = (size * parseFloat(el.dataset.w) / el.getBoundingClientRect().width) + 'px';
  }
});
document.querySelectorAll('[data-ls]').forEach(function (el) {
  var w = el.getBoundingClientRect().width;
  el.style.letterSpacing = ((parseFloat(el.dataset.ls) - w) / el.textContent.length) + 'px';
});
</script>
</body>
</html>
